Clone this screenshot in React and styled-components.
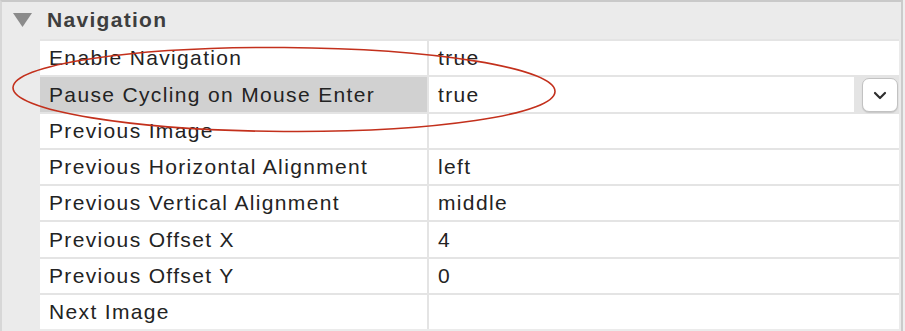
import React from 'react'
import styled, { createGlobalStyle } from 'styled-components'

const rows = [
    { name: 'Enable Navigation', value: 'true' },
    { name: 'Pause Cycling on Mouse Enter', value: 'true', selected: true },
    { name: 'Previous Image', value: '' },
    { name: 'Previous Horizontal Alignment', value: 'left' },
    { name: 'Previous Vertical Alignment', value: 'middle' },
    { name: 'Previous Offset X', value: '4' },
    { name: 'Previous Offset Y', value: '0' },
    { name: 'Next Image', value: '' },
]

const App = () => {
    return (
        <>
            <GlobalStyle />
            <Panel>
                <SectionHeader>
                    <Disclosure width="19" height="14" viewBox="0 0 19 14">
                        <polygon points="0,0 19,0 9.5,14" fill="#8b8b8b" />
                    </Disclosure>
                    <Title>Navigation</Title>
                </SectionHeader>
                <Table>
                    {rows.map(row => (
                        <Row key={row.name}>
                            <KeyCell selected={row.selected}>{row.name}</KeyCell>
                            <ValueWrap>
                                <ValueCell>{row.value}</ValueCell>
                                {row.selected && (
                                    <DropButton>
                                        <svg width="14" height="9" viewBox="0 0 14 9">
                                            <polyline points="2,2 7,7 12,2" fill="none" stroke="#2e2e2e" strokeWidth="2.2" strokeLinecap="round" strokeLinejoin="round" />
                                        </svg>
                                    </DropButton>
                                )}
                            </ValueWrap>
                        </Row>
                    ))}
                </Table>
                <Mark width="905" height="331" viewBox="0 0 905 331">
                    <ellipse cx="284" cy="89.5" rx="271" ry="42" fill="none" stroke="#c3301c" strokeWidth="1.6" transform="rotate(0.4 284 89.5)" />
                </Mark>
            </Panel>
        </>
    )
}

export default App


// styling
const GlobalStyle = createGlobalStyle`
    html, body {
        margin: 0;
        padding: 0;
        background: #efefef;
        overflow: hidden;
    }
    body {
        font-family: "Liberation Sans", Arial, sans-serif;
    }
`

const Panel = styled.div`
    position: relative;
    width: 903px;
    height: 331px;
    box-sizing: border-box;
    background: #ebebeb;
    border-top: 2px solid #c9c9c9;
    border-left: 2px solid #d7d7d7;
    border-right: 2px solid #cbcbcb;
    overflow: hidden;
`

const SectionHeader = styled.div`
    display: flex;
    align-items: center;
    height: 37px;
    padding-left: 11px;
    gap: 15px;
`

const Disclosure = styled.svg`
    display: block;
    margin-top: -2px;
`

const Title = styled.span`
    font-size: 21px;
    font-weight: bold;
    letter-spacing: 1.3px;
    color: #3e3e3e;
    margin-top: -2px;
`

const Table = styled.div`
    display: flex;
    flex-direction: column;
    gap: 2px;
    margin-left: 38px;
    margin-right: 2px;
    background: #e4e4e4;
    padding-top: 2px;
`

const Row = styled.div`
    display: grid;
    grid-template-columns: 387px 1fr;
    column-gap: 2px;
    height: 34.3px;
`

const KeyCell = styled.div`
    display: flex;
    align-items: center;
    padding-left: 9px;
    background: ${props => props.selected ? '#d1d1d1' : '#ffffff'};
    color: #232323;
    font-size: 21px;
    letter-spacing: 1.35px;
    white-space: nowrap;
`

const ValueWrap = styled.div`
    display: flex;
    background: #e4e4e4;
`

const ValueCell = styled.div`
    flex: 1;
    display: flex;
    align-items: center;
    padding-left: 9px;
    background: #ffffff;
    color: #232323;
    font-size: 21px;
    letter-spacing: 1.35px;
`

const DropButton = styled.div`
    position: relative;
    z-index: 1;
    align-self: flex-start;
    display: flex;
    align-items: center;
    justify-content: center;
    width: 34px;
    height: 32px;
    margin: 1px 1px 0 8px;
    background: #ffffff;
    border: 1px solid #c2c2c2;
    border-radius: 7px;
    box-shadow: 0 1px 1px rgba(0, 0, 0, 0.12);
`

const Mark = styled.svg`
    position: absolute;
    top: -2px;
    left: -2px;
    pointer-events: none;
    z-index: 2;
`
